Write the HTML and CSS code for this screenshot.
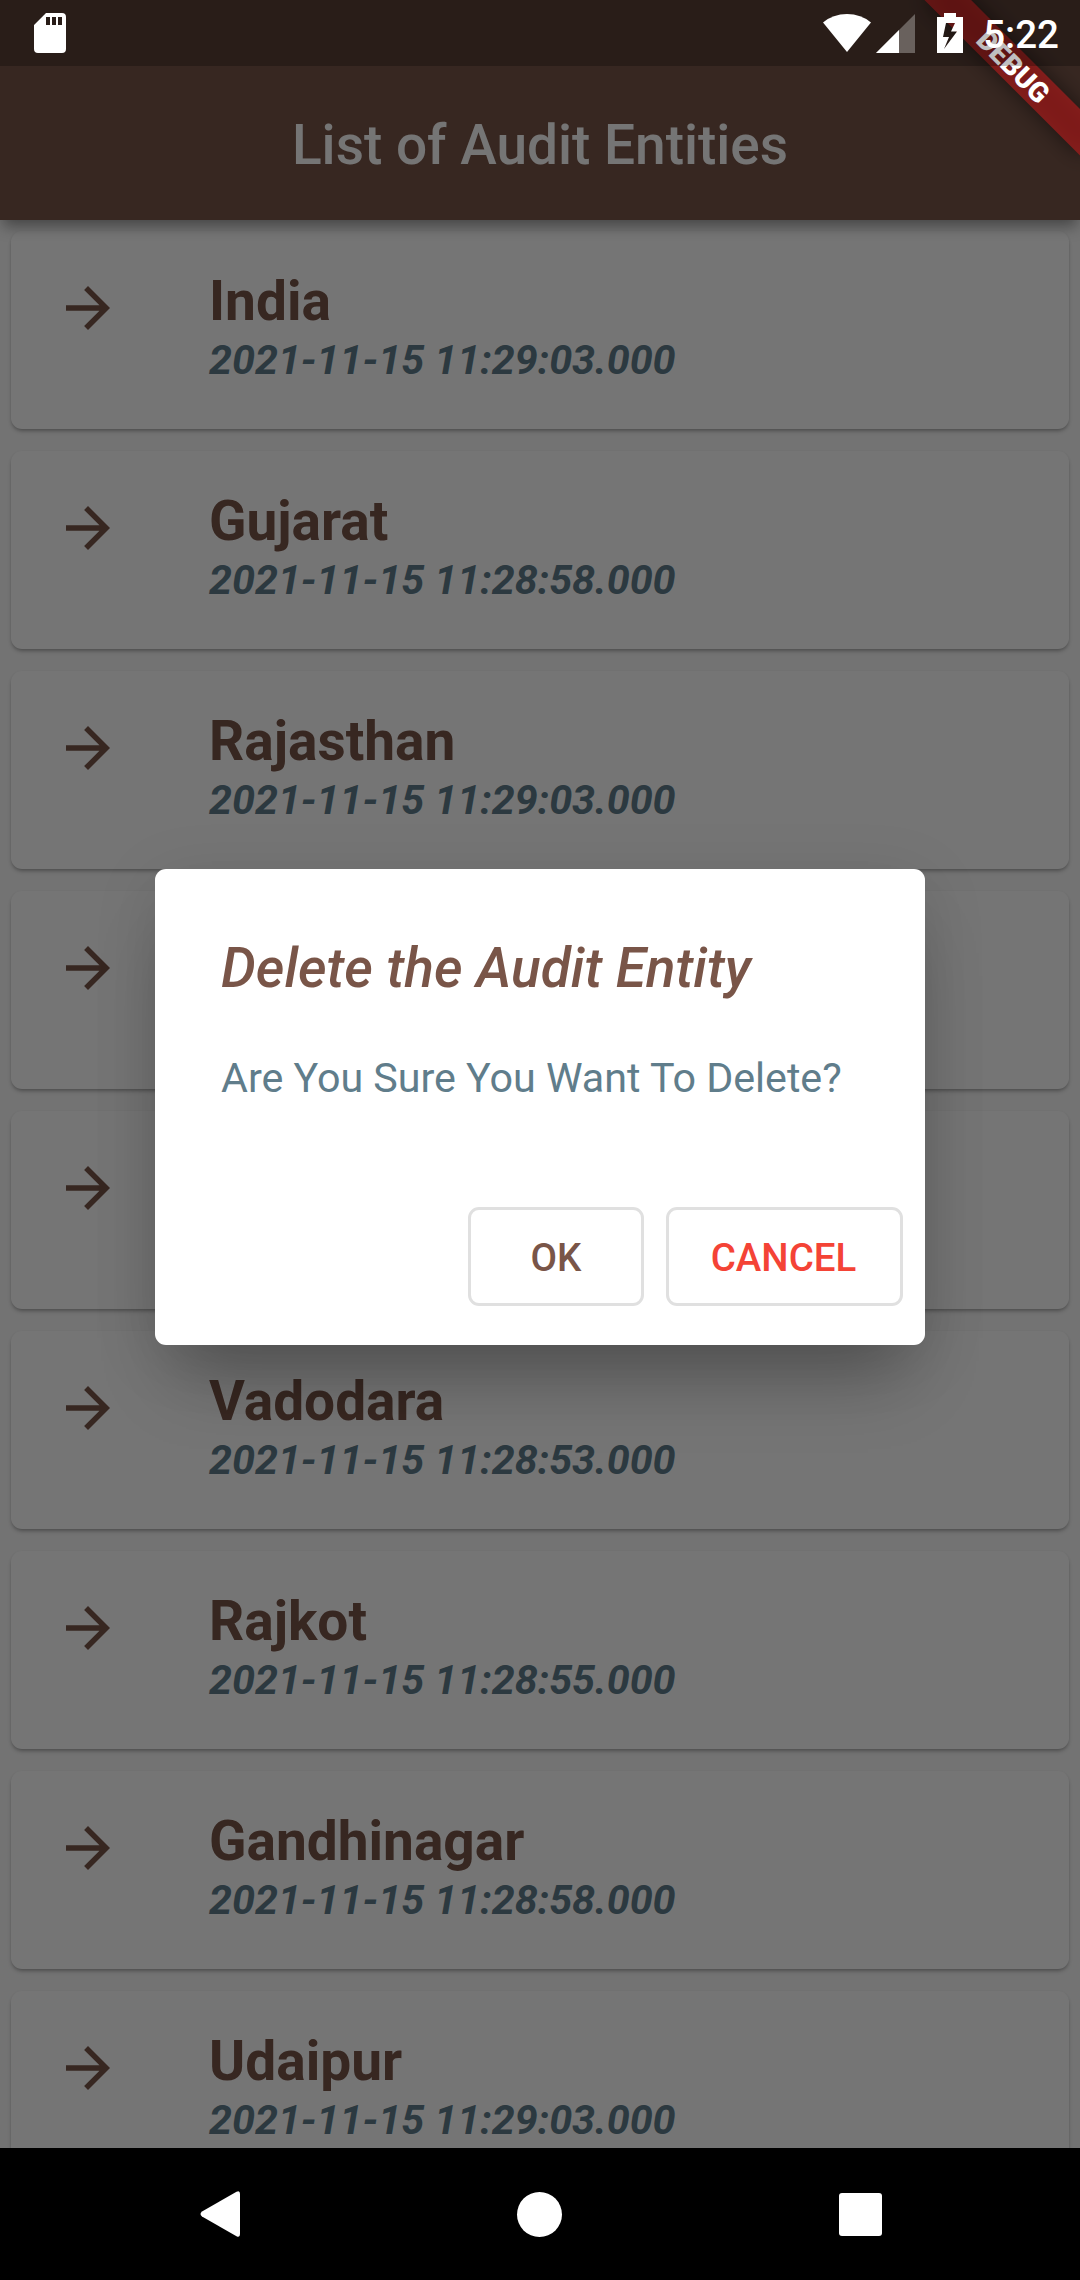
FILE: index.html
```html
<!DOCTYPE html>
<html lang="en">
<head>
<meta charset="utf-8">
<title>List of Audit Entities</title>
<link rel="stylesheet" href="styles.css">
</head>
<body>
<svg class="defs" aria-hidden="true">
  <symbol id="arrow" viewBox="0 0 24 24"><path d="M12 4l-1.41 1.41L16.17 11H4v2h12.17l-5.58 5.59L12 20l8-8z"/></symbol>
</svg>
<div class="screen">
  <header class="appbar"><h1>List of Audit Entities</h1></header>
  <main class="list">
    <article class="card"><svg class="arrow"><use href="#arrow"/></svg><div><h2>India</h2><p>2021-11-15 11:29:03.000</p></div></article>
    <article class="card"><svg class="arrow"><use href="#arrow"/></svg><div><h2>Gujarat</h2><p>2021-11-15 11:28:58.000</p></div></article>
    <article class="card"><svg class="arrow"><use href="#arrow"/></svg><div><h2>Rajasthan</h2><p>2021-11-15 11:29:03.000</p></div></article>
    <article class="card"><svg class="arrow"><use href="#arrow"/></svg></article>
    <article class="card"><svg class="arrow"><use href="#arrow"/></svg></article>
    <article class="card"><svg class="arrow"><use href="#arrow"/></svg><div><h2>Vadodara</h2><p>2021-11-15 11:28:53.000</p></div></article>
    <article class="card"><svg class="arrow"><use href="#arrow"/></svg><div><h2>Rajkot</h2><p>2021-11-15 11:28:55.000</p></div></article>
    <article class="card"><svg class="arrow"><use href="#arrow"/></svg><div><h2>Gandhinagar</h2><p>2021-11-15 11:28:58.000</p></div></article>
    <article class="card"><svg class="arrow"><use href="#arrow"/></svg><div><h2>Udaipur</h2><p>2021-11-15 11:29:03.000</p></div></article>
  </main>
  <div class="barrier">
    <section class="dialog" role="dialog">
      <h2 class="dialog-title">Delete the Audit Entity</h2>
      <p class="dialog-text">Are You Sure You Want To Delete?</p>
      <div class="actions">
        <button class="btn ok">OK</button>
        <button class="btn cancel">CANCEL</button>
      </div>
    </section>
  </div>
  <div class="banner">DEBUG</div>
  <div class="status">
    <svg class="sd" viewBox="0 0 32 40"><path fill-rule="evenodd" d="M12 0H28a4 4 0 0 1 4 4V36a4 4 0 0 1-4 4H4a4 4 0 0 1-4-4V12zM12 4v8h4V4zM18 4v8h4V4zM24 4v8h4V4z"/></svg>
    <svg class="wifi" viewBox="0 0 48 38"><path d="M0 8.500Q10 0 24 0T48 8.500L24 38z"/></svg>
    <svg class="signal" viewBox="0 0 39 39"><path opacity=".3" d="M39 0V39H0z"/><path d="M23 16V39H0z"/></svg>
    <svg class="battery" viewBox="0 0 26 40"><path fill-rule="evenodd" d="M7 0H19V4H26V40H0V4H7zM9 10L6 24h6L7 36 20 18.500h-6L18 10z"/></svg>
    <span class="clock">5:22</span>
  </div>
  <nav class="nav">
    <svg class="back" viewBox="0 0 40 46"><path d="M36.500 .8Q40-1 40 3V43Q40 47 36.500 45.200L2 25.500Q-1 23 2 20.500z"/></svg>
    <span class="home"></span>
    <span class="recent"></span>
  </nav>
</div>
</body>
</html>
```
FILE: styles.css
```css
* { box-sizing: border-box; margin: 0; padding: 0; }
body { font-family: Roboto, sans-serif; background: #000; }
.defs { position: absolute; width: 0; height: 0; }
svg { display: block; fill: #fff; }
.screen { position: relative; display: flex; flex-direction: column; width: 1080px; height: 2280px; overflow: hidden; background: #fafafa; }
.appbar { position: relative; z-index: 1; flex: none; height: 220px; padding-top: 70px; display: flex; align-items: center; justify-content: center; background: #795548; color: #fff; box-shadow: 0 9px 14px -3px rgba(0, 0, 0, .4); }
.appbar h1 { font-size: 55px; line-height: 64px; font-weight: 500; }
.list { flex: 1; min-height: 0; overflow: hidden; padding: 11px; display: flex; flex-direction: column; gap: 22px; }
.card { flex: none; height: 198px; padding: 38px 44px; display: grid; grid-template-columns: 110px 1fr; column-gap: 44px; align-items: start; border-radius: 11px; background: #fff; box-shadow: 0 3px 4px -1px rgba(0, 0, 0, .3), 0 1px 3px rgba(0, 0, 0, .08); }
.arrow { width: 66px; height: 66px; margin-top: 6px; fill: #795548; }
.card h2 { font-size: 55px; line-height: 64px; font-weight: 700; color: #795548; }
.card p { margin-top: 3px; font-size: 41.25px; line-height: 48px; font-weight: 700; font-style: italic; color: #607d8b; }
.barrier { position: absolute; z-index: 2; inset: 0 0 132px; display: flex; align-items: flex-start; justify-content: center; padding-top: 869px; background: rgba(0, 0, 0, .541); }
.dialog { width: 770px; height: 475.500px; padding: 67px 22px 38.500px 66px; display: flex; flex-direction: column; border-radius: 11px; background: #fff; box-shadow: 0 50px 70px -22px rgba(0, 0, 0, .28), 0 12px 66px rgba(0, 0, 0, .1); }
.dialog-title { font-size: 55px; line-height: 64px; font-weight: 500; font-style: italic; color: #795548; }
.dialog-text { margin-top: 54px; font-size: 41.25px; line-height: 48px; letter-spacing: -.03px; color: #607d8b; }
.actions { margin-top: auto; display: flex; justify-content: flex-end; gap: 22px; }
.btn { height: 99px; padding-top: 2px; border: 3px solid #e0e0e0; border-radius: 11px; background: none; font: 500 38.500px/45px Roboto, sans-serif; }
.ok { width: 176px; color: #795548; }
.cancel { width: 237px; padding-right: 2px; color: #f44336; }
.banner { position: absolute; z-index: 3; left: 970px; top: 77px; width: 220px; height: 33px; transform-origin: 110px -77px; transform: rotate(45deg); color: #fff; font-size: 28px; line-height: 35px; font-weight: 900; text-align: center; }
.banner::before, .banner::after { content: ""; position: absolute; z-index: -1; inset: 0; background: rgba(183, 28, 28, .627); }
.banner::before { background: rgba(0, 0, 0, .5); filter: blur(10.900px); }
.status { position: absolute; z-index: 4; inset: 0 0 auto; height: 66px; padding: 0 21px 0 34px; display: flex; align-items: center; background: rgba(0, 0, 0, .25); color: #fff; }
.sd { width: 32px; height: 40px; }
.wifi { width: 48px; height: 38px; margin-left: auto; }
.signal { width: 39px; height: 39px; margin-left: 5px; }
.battery { width: 26px; height: 40px; margin-left: 22px; }
.clock { margin-left: 20px; padding-top: 3px; font-size: 38.500px; font-weight: 500; line-height: 45px; }
.nav { flex: none; height: 132px; padding: 0 198px 0 200px; display: flex; align-items: center; justify-content: space-between; background: #000; }
.back { width: 40px; height: 46px; }
.home { width: 45px; height: 45px; border-radius: 50%; background: #fff; }
.recent { width: 43px; height: 43px; border-radius: 3px; background: #fff; }
```
